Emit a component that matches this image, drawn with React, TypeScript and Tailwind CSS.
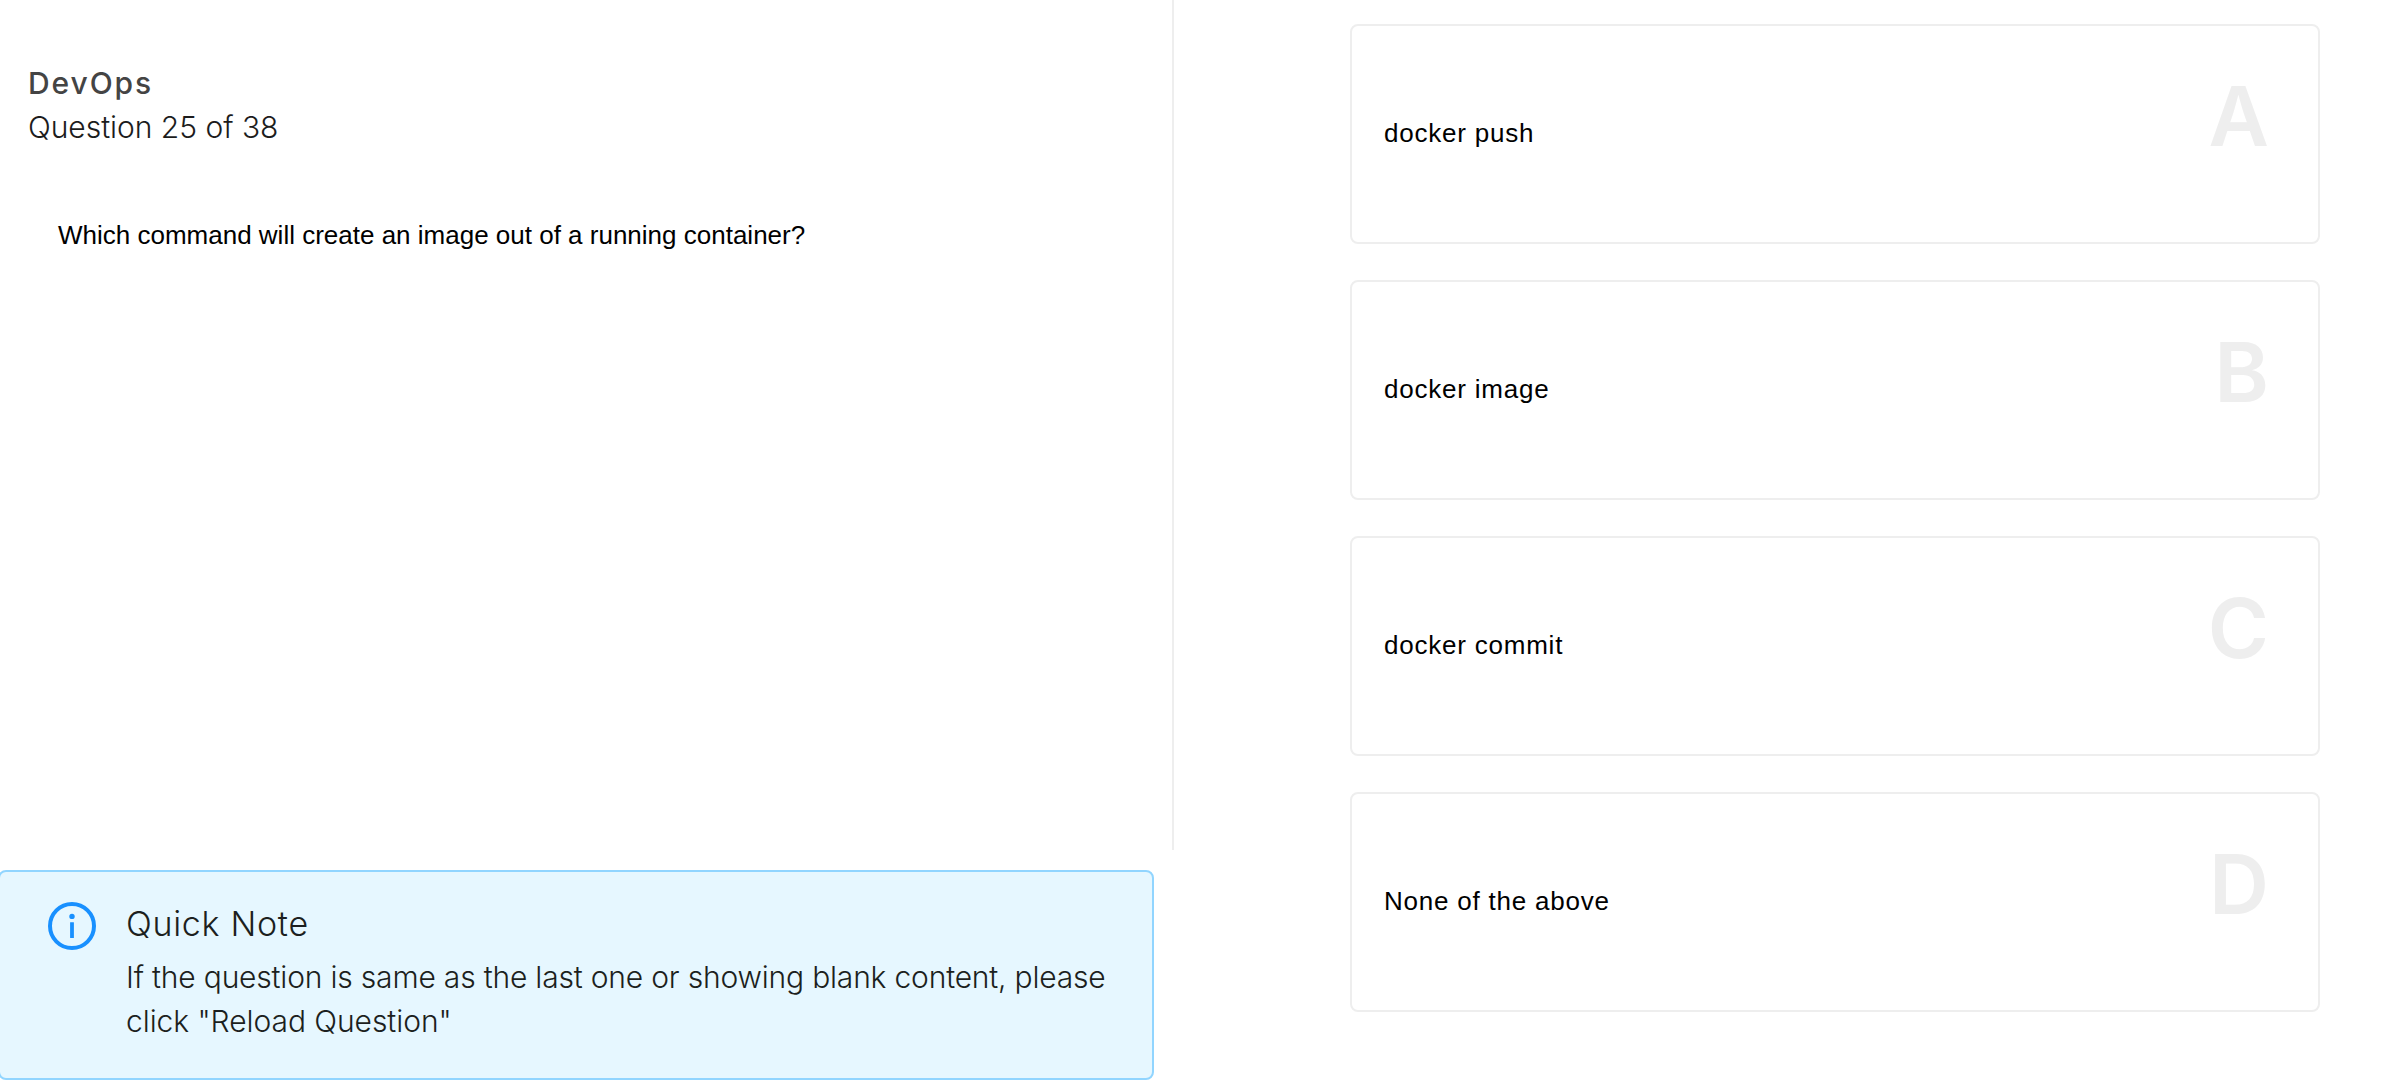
const options = [
  { letter: "A", label: "docker push" },
  { letter: "B", label: "docker image" },
  { letter: "C", label: "docker commit" },
  { letter: "D", label: "None of the above" },
];

function InfoIcon() {
  return (
    <svg viewBox="0 0 48 48" className="size-12 shrink-0 text-[#1890ff]" fill="none">
      <circle cx="24" cy="24" r="22" stroke="currentColor" strokeWidth="4" />
      <circle cx="24" cy="14.4" r="2.7" fill="currentColor" />
      <rect x="22.1" y="20.3" width="3.8" height="15.7" rx="0.3" fill="currentColor" />
    </svg>
  );
}

function QuickNote() {
  return (
    <aside className="-ml-0.5 flex h-[210px] w-[1156px] items-start rounded-lg border-2 border-[#91d5ff] bg-[#e6f7ff] pt-[28px] pl-12 text-[#1c1f20]">
      <div className="pt-0.5">
        <InfoIcon />
      </div>
      <div className="ml-[30px] font-light">
        <h2 className="text-[34px] leading-12 tracking-[0.7px]">Quick Note</h2>
        <p className="mt-[7px] text-[30px] leading-11 whitespace-nowrap">
          <span className="tracking-[-0.19px]">If the question is same as the last one or showing blank content, please</span>
          <br />
          <span className="tracking-[-0.06px]">click "Reload Question"</span>
        </p>
      </div>
    </aside>
  );
}

function Option({ letter, label }: { letter: string; label: string }) {
  return (
    <li className="flex h-[220px] justify-between rounded-lg border-2 border-[#eee] pr-[49px] pl-8">
      <span className="self-center pb-0.5 font-['Liberation_Sans',sans-serif] text-[26px] leading-10 tracking-[0.78px] text-black">
        {label}
      </span>
      <span className="mt-[49px] text-[83px] leading-none font-semibold text-[#eee]">{letter}</span>
    </li>
  );
}

export default function App() {
  return (
    <main className="flex h-[1088px] w-[2398px] overflow-hidden bg-white font-['Inter',sans-serif]">
      <section className="flex w-[1174px] flex-col gap-5">
        <div className="h-[850px] border-r-2 border-[#eee] pt-[61px] pl-7">
          <h1 className="text-[30px] leading-11 font-medium tracking-[1.9px] text-[#444]">DevOps</h1>
          <p className="text-[30px] leading-11 font-light tracking-[-0.03px] text-[#1c1c1c]">Question 25 of 38</p>
          <p className="mt-[66px] pl-[30px] font-['Liberation_Sans',sans-serif] text-[26px] leading-10 text-black">
            Which command will create an image out of a running container?
          </p>
        </div>
        <QuickNote />
      </section>
      <ul className="ml-44 flex w-[970px] flex-col gap-9 pt-6">
        {options.map((o) => (
          <Option key={o.letter} {...o} />
        ))}
      </ul>
    </main>
  );
}
